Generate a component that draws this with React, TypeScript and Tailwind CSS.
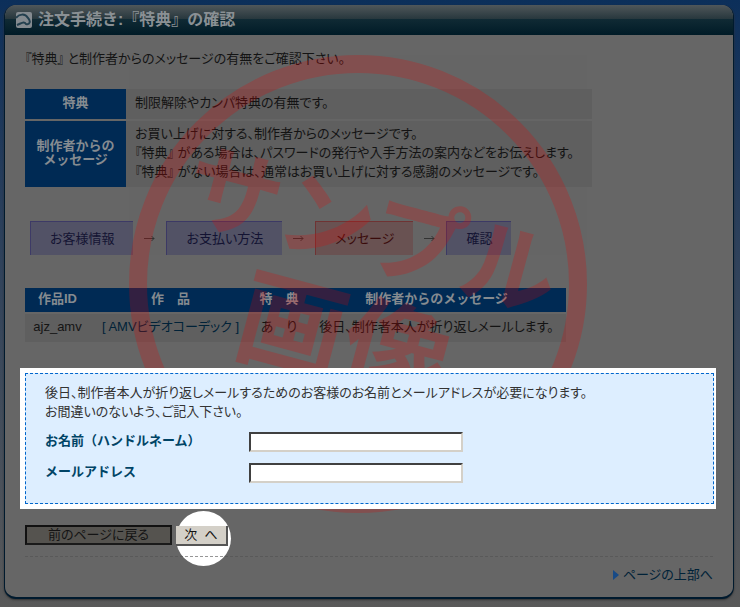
import type { ReactNode } from "react";

function Arrow() {
  return (
    <svg aria-hidden="true" className="h-[7px] w-[11px] text-[#333]" viewBox="0 0 11 7" fill="none" stroke="currentColor">
      <path d="M0 3.5h10M7.5 1l2.5 2.5L7.5 6" />
    </svg>
  );
}

function Step({ children, current }: { children: ReactNode; current?: boolean }) {
  return (
    <li
      aria-current={current ? "step" : undefined}
      className={
        current
          ? "border-t border-l border-[#703434] bg-[#6a5252] px-[19px] py-[7px] text-[#3a0c0c]"
          : "border-t border-l border-[#3d3a66] bg-[#525266] px-[19px] py-[7px] text-[#141433]"
      }
    >
      {children}
    </li>
  );
}

function Stamp() {
  return (
    <svg aria-hidden="true" className="pointer-events-none absolute top-[50px] left-[124px] h-[458px] w-[458px] opacity-[0.22] [font-feature-settings:normal]" viewBox="0 0 458 458">
      <circle cx="229" cy="229" r="220" fill="none" stroke="#e60000" strokeWidth="18" />
      <g transform="rotate(15 229 229)" fill="#e60000" fontWeight="700" textAnchor="middle">
        <text x="229" y="209" fontSize="96">サンプル</text>
        <text x="230" y="326" fontSize="108">画像</text>
      </g>
    </svg>
  );
}

const labelClass = "pb-[2px] leading-4 font-bold text-[#004466]";
const fieldClass =
  "h-5 w-[214px] border-2 border-t-[#404040] border-r-[#d4d0c8] border-b-[#d4d0c8] border-l-[#404040] bg-white px-1 outline-none";

export default function App() {
  return (
    <div className="bg-linear-to-b from-[#0c2f5a] to-[#595959] px-1 pt-[5px] pb-2 font-['Liberation_Sans','Noto_Sans_CJK_JP',sans-serif] text-[13px] leading-[19px] text-[#141414] [font-feature-settings:'palt']">
      <div className="relative mr-[2px] overflow-hidden rounded-[12px] border-x border-b-2 border-[#001a2e] bg-[#666] shadow-[0_1px_2px_#333]">
        <header className="flex h-[30px] items-center gap-[6px] bg-[linear-gradient(#50575a,#27373d_47%,#102a34_47%,#001b27)] px-[11px]">
          <svg aria-hidden="true" className="h-4 w-4" viewBox="0 0 16 16">
            <rect width="16" height="16" rx="2" fill="#858b90" />
            <path d="M0 6C3 2 9 1 12 6c3 3 2 7-2 6-2-3-4-1-9 1" fill="none" stroke="#24404f" strokeWidth="2" />
          </svg>
          <h1 className="text-base font-bold text-[#8a9094] [font-feature-settings:normal]">注文手続き:『特典』の確認</h1>
        </header>

        <main className="px-5 pt-[14px] pb-3">
          <p>『特典』 と制作者からのメッセージの有無をご確認下さい。</p>

          <table className="mt-[21px] w-[567px] border-collapse">
            <tbody>
              <tr className="h-[31px] border-b-2 border-[#666]">
                <th scope="row" className="w-[101px] bg-[#002a54] pb-[3px] text-[#858b90] [font-feature-settings:normal]">特典</th>
                <td className="bg-[#5f5f5f] px-[9px] pb-[3px]">制限解除やカンパ特典の有無です。</td>
              </tr>
              <tr className="h-[67px]">
                <th scope="row" className="bg-[#002a54] pb-[3px] leading-[14px] text-[#858b90] [font-feature-settings:normal]">
                  制作者からの<br />メッセージ
                </th>
                <td className="bg-[#5f5f5f] px-[9px] pb-[3px]">
                  お買い上げに対する、制作者からのメッセージです。<br />
                  『特典』 がある場合は、パスワードの発行や入手方法の案内などをお伝えします。<br />
                  『特典』 がない場合は、通常はお買い上げに対する感謝のメッセージです。
                </td>
              </tr>
            </tbody>
          </table>

          <ol className="mt-[34px] ml-[5px] flex h-[34px] items-center gap-[11px] whitespace-nowrap">
            <Step>お客様情報</Step>
            <Arrow />
            <Step>お支払い方法</Step>
            <Arrow />
            <Step current>メッセージ</Step>
            <Arrow />
            <Step>確認</Step>
          </ol>

          <table className="mt-[33px] w-[541px] table-fixed border-collapse whitespace-nowrap">
            <thead>
              <tr className="h-[25px] border-b-2 border-[#666] bg-[#002a54] text-[#858b90] [font-feature-settings:normal]">
                <th scope="col" className="w-[65px] pb-[3px]">作品ID</th>
                <th scope="col" className="w-[161px] pb-[3px]">作　品</th>
                <th scope="col" className="w-[56px] pb-[3px]">特　典</th>
                <th scope="col" className="pb-[3px]">制作者からのメッセージ</th>
              </tr>
            </thead>
            <tbody>
              <tr className="h-[29px] bg-[#5f5f5f] text-center">
                <td className="pb-[3px]">ajz_amv</td>
                <td className="pb-[3px]"><a href="#codec" className="text-[#002238]">[ AMVビデオコーデック ]</a></td>
                <td className="pb-[3px]">あ　り</td>
                <td className="pb-[3px]">後日、制作者本人が折り返しメールします。</td>
              </tr>
            </tbody>
          </table>

          <form onSubmit={(e) => e.preventDefault()}>
            <div className="relative z-10 mt-[26px] -mr-[3px] -ml-[5px] bg-white py-[5px] pr-[2px] pl-[5px]">
              <div className="border border-dashed border-[color:#0066cc] bg-[#ddeeff] px-[19px] pt-[9px] pb-5 text-[#333]">
                <p>
                  後日、制作者本人が折り返しメールするためのお客様のお名前とメールアドレスが必要になります。<br />
                  お間違いのないよう、ご記入下さい。
                </p>
                <div className="mt-[11px] grid grid-cols-[204px_1fr] items-center gap-y-[11px] [font-feature-settings:normal]">
                  <label htmlFor="name" className={labelClass}>お名前（ハンドルネーム）</label>
                  <input id="name" type="text" className={fieldClass} />
                  <label htmlFor="mail" className={labelClass}>メールアドレス</label>
                  <input id="mail" type="email" className={fieldClass} />
                </div>
              </div>
            </div>

            <div className="mt-4 flex gap-1">
              <button type="button" className="h-5 w-[147px] border-2 border-t-[#111] border-r-[#1a1a1a] border-b-[#1a1a1a] border-l-[#111] bg-[#55534f] leading-4">
                前のページに戻る
              </button>
              <div className="relative">
                <span className="absolute -top-[14px] left-0 size-[55px] rounded-full bg-white" />
                <button type="submit" className="relative h-5 w-[52px] border-r-2 border-b-2 border-[#555] bg-[#d4d0c8] leading-4">
                  次{"\u00a0\u00a0"}へ
                </button>
              </div>
            </div>
          </form>

          <div className="relative mt-[10px] border-t border-dashed border-[#505050]/60 pt-2 text-right">
            <a href="#top" className="inline-flex items-center gap-1 text-[#002238]">
              <svg aria-hidden="true" className="h-[10px] w-[6px]" viewBox="0 0 6 10">
                <path d="M0 0l6 5-6 5z" fill="#184a86" />
              </svg>
              ページの上部へ
            </a>
          </div>
        </main>
        <Stamp />
      </div>
    </div>
  );
}
